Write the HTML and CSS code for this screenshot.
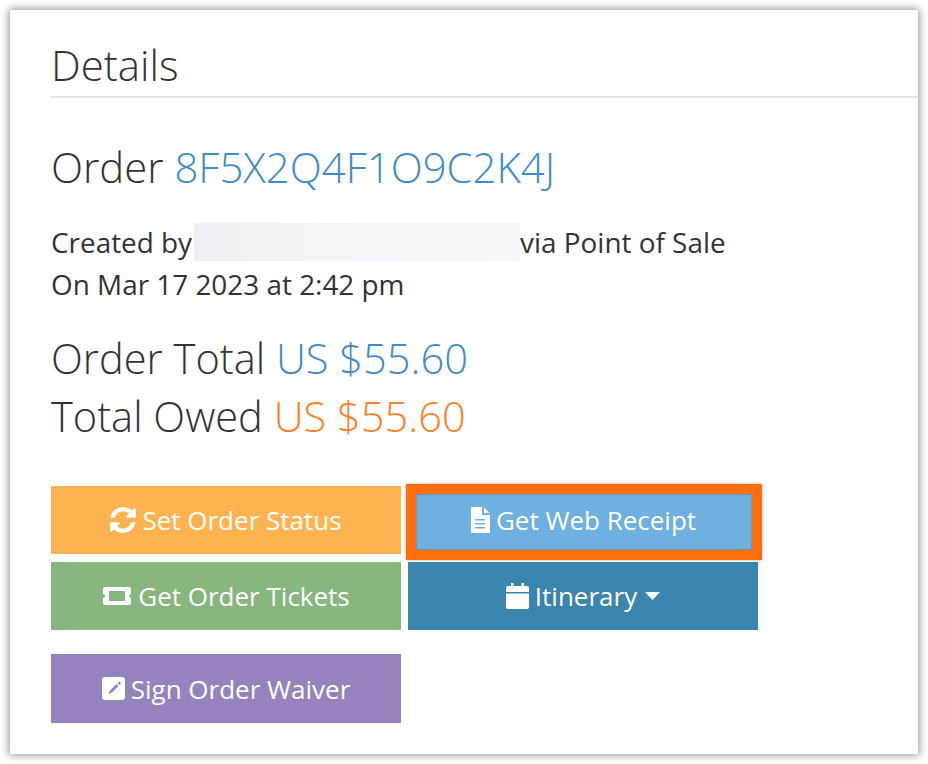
FILE: index.html
```html
<!DOCTYPE html>
<html lang="en">
<head>
<meta charset="utf-8">
<title>Order details</title>
<link rel="stylesheet" href="styles.css">
</head>
<body>
<main class="card">
  <h1 class="title">Details</h1>
  <h2 class="order">Order <a class="blue">8F5X2Q4F1O9C2K4J</a></h2>
  <p class="meta">Created by<span class="redact"></span>via Point of Sale<br>On Mar 17 2023 at 2:42 pm</p>
  <div class="totals">
    <div>Order Total <span class="blue">US $55.60</span></div>
    <div>Total Owed <span class="orange">US $55.60</span></div>
  </div>
  <div class="actions">
    <a class="btn status">
      <svg class="icon" width="26" height="26" viewBox="0 0 1536 1536"><path d="M1511 928q0 5-1 7-64 268-268 434.5t-478 166.5q-146 0-282.5-55t-243.5-157l-129 129q-19 19-45 19t-45-19-19-45v-448q0-26 19-45t45-19h448q26 0 45 19t19 45-19 45l-137 137q71 66 161 102t187 36q134 0 250-65t186-179q11-17 53-117 8-23 30-23h192q13 0 22.5 9.5t9.5 22.5zm25-800v448q0 26-19 45t-45 19h-448q-26 0-45-19t-19-45 19-45l138-138q-148-137-349-137-134 0-250 65t-186 179q-11 17-53 117-8 23-30 23h-199q-13 0-22.5-9.5t-9.5-22.5v-7q65-268 270-434.5t480-166.5q146 0 284 55.5t245 156.5l130-129q19-19 45-19t45 19 19 45z"/></svg>
      Set Order Status</a>
    <a class="btn receipt">
      <svg class="icon" width="20" height="28" viewBox="0 0 20 28"><path fill-rule="evenodd" d="M2 1h10v8h8v17a1 1 0 0 1-1 1H2a1 1 0 0 1-1-1V2a1 1 0 0 1 1-1zM5 13v1.600h10V13zM5 17v1.600h10V17zM5 21v1.600h10V21z"/><path d="M14 1.500 19.500 7H14z"/></svg>
      Get Web Receipt
      <span class="highlight"></span></a>
    <a class="btn tickets">
      <svg class="icon" width="30" height="20" viewBox="0 0 30 20"><path fill-rule="evenodd" d="M3 1h24a2 2 0 0 1 2 2v5a2 2 0 0 0 0 4v5a2 2 0 0 1-2 2H3a2 2 0 0 1-2-2v-5a2 2 0 0 0 0-4V3a2 2 0 0 1 2-2zM7 5v10h16V5z"/></svg>
      Get Order Tickets</a>
    <a class="btn itinerary">
      <svg class="icon" width="23" height="26" viewBox="0 0 23 26"><path fill-rule="evenodd" d="M5 0h2.500v3h8V0H18v3h3a2 2 0 0 1 2 2v4H0V5a2 2 0 0 1 2-2h3zM0 10.500h23V24a2 2 0 0 1-2 2H2a2 2 0 0 1-2-2z"/></svg>
      Itinerary
      <svg class="caret" width="15" height="8" viewBox="0 0 15 8"><path d="M0 0h15L7.500 8z"/></svg></a>
    <a class="btn waiver">
      <svg class="icon" width="23" height="23" viewBox="0 0 23 23"><path fill-rule="evenodd" d="M3 0h17a3 3 0 0 1 3 3v17a3 3 0 0 1-3 3H3a3 3 0 0 1-3-3V3a3 3 0 0 1 3-3zM14.500 7 8 13.500l-1.500 3.500 3.500-1.500L16.500 9zM15.500 6l2 2 1-1a1 1 0 0 0 0-1.400l-.6-.6a1 1 0 0 0-1.400 0z"/></svg>
      Sign Order Waiver</a>
  </div>
</main>
</body>
</html>
```
FILE: styles.css
```css
html, body {
  margin: 0;
  background: #fff;
}
body {
  width: 928px;
  height: 764px;
  padding: 10px;
  box-sizing: border-box;
  overflow: hidden;
  font-family: "Open Sans", "Liberation Sans", sans-serif;
  color: #333;
}
.card {
  width: 908px;
  height: 744px;
  box-sizing: border-box;
  padding: 0 0 0 41px;
  background: #fff;
  box-shadow: 0 0 8px 1px rgba(0, 0, 0, 0.45);
}
.title {
  margin: 0;
  height: 88px;
  box-sizing: border-box;
  padding-top: 27px;
  font-size: 42px;
  line-height: 56px;
  font-weight: 300;
  border-bottom: 2px solid #e5e5e5;
}
.order {
  margin: 38px 0 0;
  font-size: 41.900px;
  line-height: 62px;
  font-weight: 300;
}
.blue { color: #428bca; }
.orange { color: #ff7f27; }
.meta {
  margin: 23px 0 0;
  font-size: 27.900px;
  line-height: 42px;
  font-weight: 400;
}
.redact {
  display: inline-block;
  width: 326px;
  height: 38px;
  margin: 2px 0 0 2px;
  vertical-align: top;
  background: linear-gradient(90deg, #edf1f6, #f6f8fb);
}
.totals {
  margin-top: 24px;
  font-size: 41.600px;
  line-height: 58px;
  font-weight: 300;
}
.actions {
  display: grid;
  grid-template-columns: 350px 350px;
  grid-auto-rows: 68px;
  column-gap: 7px;
  row-gap: 8px;
  margin-top: 41px;
}
.btn {
  position: relative;
  display: flex;
  align-items: center;
  justify-content: center;
  gap: 6px;
  color: #fff;
  font-size: 26px;
  line-height: 34px;
  white-space: nowrap;
}
.icon, .caret {
  fill: #fff;
  flex: none;
}
.caret { margin-left: 2px; }
.status { background: #ffb350; }
.receipt { background: #6eb0df; }
.tickets { background: #87b67f; }
.itinerary { background: #3a85ad; }
.waiver {
  background: #9483bc;
  margin-top: 16px;
  height: 69px;
}
.highlight {
  position: absolute;
  top: -2px;
  left: -2px;
  right: -4px;
  bottom: -6px;
  border: 10px solid #ff6d0c;
  box-shadow: 0 0 3px rgba(0, 0, 0, 0.3), inset 0 0 2px rgba(0, 0, 0, 0.4);
}
```
